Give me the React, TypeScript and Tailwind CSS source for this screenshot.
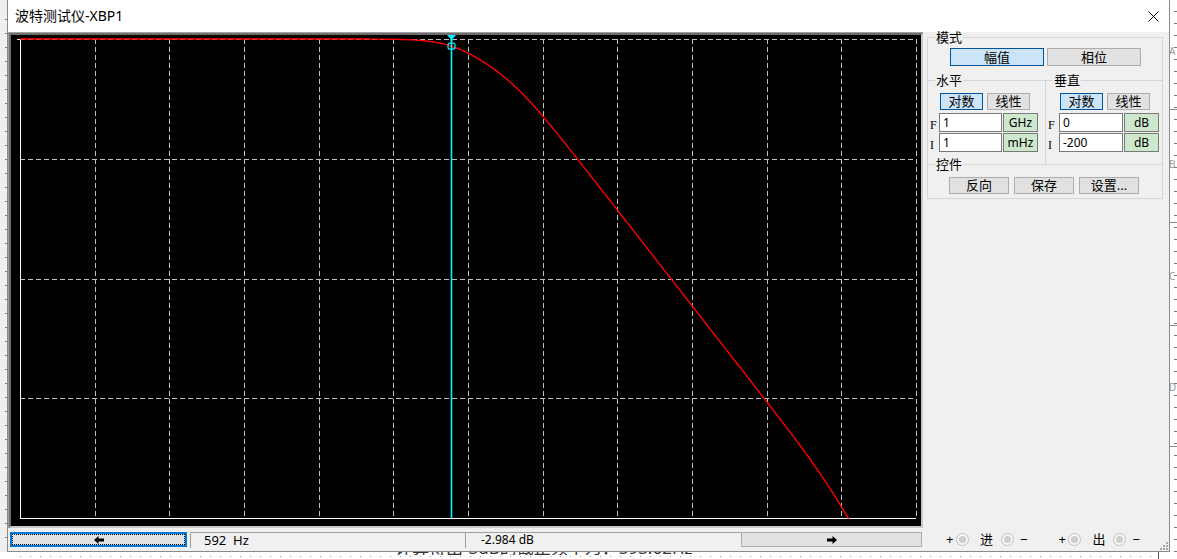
import React from 'react';

// plot geometry (inside the black area)
const X0 = 9;
const Y0 = 4;
const PW = 896;
const PH = 479;

const magDb = (f: number) => {
  const p = (fc: number) => 10 * Math.log10(1 + (f / fc) ** 2);
  return -(p(608) + p(4440) + p(83e6));
};

const curvePoints = () => {
  const pts: string[] = [];
  for (let x = X0; x <= X0 + PW; x += 1) {
    const f = Math.pow(10, ((x - X0) / PW) * 12 - 3);
    const y = Y0 + (-magDb(f) / 200) * PH;
    if (y > Y0 + PH) {
      pts.push(`${x},${Y0 + PH}`);
      break;
    }
    pts.push(`${x},${y.toFixed(2)}`);
  }
  return pts.join(' ');
};

const Plot = () => {
  const cols = Array.from({ length: 12 }, (_, i) => Math.round(X0 + ((i + 1) * PW) / 12) + 0.5);
  const rows = Array.from({ length: 4 }, (_, i) => Math.round(Y0 + (i * PH) / 4) + 0.5);
  const cx = 440.5;
  const cy = Y0 + (2.984 / 200) * PH;
  return (
    <svg width={909} height={490} className="block">
      {cols.map((x) => (
        <line key={x} x1={x} x2={x} y1={Y0} y2={Y0 + PH} stroke="#c4c4c4" strokeDasharray="5 3" />
      ))}
      {rows.map((y) => (
        <line key={y} x1={X0} x2={X0 + PW} y1={y} y2={y} stroke="#c4c4c4" strokeDasharray="5 3" />
      ))}
      <line x1={X0 + 0.5} x2={X0 + 0.5} y1={Y0} y2={Y0 + PH + 0.5} stroke="#fff" />
      <line x1={X0} x2={X0 + PW} y1={Y0 + PH + 0.5} y2={Y0 + PH + 0.5} stroke="#fff" />
      <line x1={6} x2={X0} y1={Y0 + 0.5} y2={Y0 + 0.5} stroke="#fff" />
      <polyline points={curvePoints()} fill="none" stroke="#ff0000" strokeWidth={1.4} />
      <line x1={cx} x2={cx} y1={0} y2={Y0 + PH} stroke="#00f0ff" strokeWidth={1.6} />
      <polygon points={`${cx - 4.5},0 ${cx + 4.5},0 ${cx + 1},4 ${cx + 1},6 ${cx - 1},6 ${cx - 1},4`} fill="#00f0ff" />
      <rect x={cx - 3.5} y={cy - 3} width={7} height={6} rx={2} fill="none" stroke="#00f0ff" strokeWidth={1.2} />
    </svg>
  );
};

const Btn = ({ label, active, className }: { label: string; active?: boolean; className: string }) => (
  <div
    className={`flex items-center justify-center border text-[13px] leading-none text-black ${
      active ? 'bg-[#cce4f7] border-[#005499]' : 'bg-[#e1e1e1] border-[#adadad]'
    } ${className}`}
  >
    {label}
  </div>
);

const Legend = ({ text, className = 'ml-[7px]' }: { text: string; className?: string }) => (
  <legend className={`${className} px-[1px] text-[13px] leading-[11px] text-black`}>{text}</legend>
);

const FieldRow = ({ tag, value, unit, labelW, inputW }: { tag: string; value: string; unit: string; labelW: string; inputW: string }) => (
  <div className="flex h-[19px] items-stretch">
    <div className={`${labelW} flex items-center pl-[2px] pt-[4px] text-[12px] font-['Liberation_Serif',serif] leading-none`}>
      {tag}
    </div>
    <div className={`${inputW} flex items-center border border-[#7a7a7a] bg-white pl-[3px] text-[12px] leading-none`}>
      {value}
    </div>
    <div className="ml-[1px] flex w-[35px] items-center justify-center border border-[#7a7a7a] bg-[#cde8cd] text-[12px] leading-none">
      {unit}
    </div>
  </div>
);

const Radio = () => (
  <div className="flex h-[13px] w-[13px] items-center justify-center rounded-full border border-[#c2c2c2] bg-[#f6f6f6]">
    <div className="h-[7px] w-[7px] rounded-full bg-[#cdcdcd]" />
  </div>
);

const Arrow = ({ dir }: { dir: 'l' | 'r' }) => (
  <svg width={10} height={8} viewBox="0 0 10 8" className={dir === 'r' ? 'rotate-180' : ''}>
    <polygon points="0,4 4.5,0 4.5,2.5 10,2.5 10,5.5 4.5,5.5 4.5,8" fill="#000" />
  </svg>
);

const Panel = () => (
  <fieldset className="ml-[4px] w-[236px] self-start border border-[#d6d6d6]">
    <Legend text="模式" />
    <div className="ml-[22px] mt-[5px] flex gap-[3px]">
      <Btn label="幅值" active className="h-[18px] w-[94px]" />
      <Btn label="相位" className="h-[18px] w-[94px]" />
    </div>
    <div className="mt-[9px] flex">
      <fieldset className="h-[90px] w-[118px] border-t border-r border-[#d6d6d6]">
        <Legend text="水平" />
        <div className="ml-[12px] mt-[7px] flex gap-[4px]">
          <Btn label="对数" active className="h-[17px] w-[43px]" />
          <Btn label="线性" className="h-[17px] w-[43px]" />
        </div>
        <div className="mt-[3px] flex flex-col gap-[1px]">
          <FieldRow tag="F" value="1" unit="GHz" labelW="w-[11px]" inputW="w-[63px]" />
          <FieldRow tag="I" value="1" unit="mHz" labelW="w-[11px]" inputW="w-[63px]" />
        </div>
      </fieldset>
      <fieldset className="h-[90px] flex-1 border-t border-[#d6d6d6]">
        <Legend text="垂直" />
        <div className="ml-[14px] mt-[7px] flex gap-[4px]">
          <Btn label="对数" active className="h-[17px] w-[43px]" />
          <Btn label="线性" className="h-[17px] w-[43px]" />
        </div>
        <div className="mt-[3px] flex flex-col gap-[1px]">
          <FieldRow tag="F" value="0" unit="dB" labelW="w-[13px]" inputW="w-[64px]" />
          <FieldRow tag="I" value="-200" unit="dB" labelW="w-[13px]" inputW="w-[64px]" />
        </div>
      </fieldset>
    </div>
    <fieldset className="-mt-[6px] border-t border-[#d6d6d6]">
      <Legend text="控件" />
      <div className="mb-[4px] ml-[21px] mt-[7px] flex gap-[5px]">
        <Btn label="反向" className="h-[17px] w-[60px]" />
        <Btn label="保存" className="h-[17px] w-[60px]" />
        <Btn label="设置..." className="h-[17px] w-[60px]" />
      </div>
    </fieldset>
  </fieldset>
);

const Backdrop = () => (
  <div className="absolute inset-0 z-0">
    {/* left edge of the schematic */}
    <div className="absolute left-0 top-0 h-[552px] w-[7px] bg-[#efefef]" />
    <div className="absolute left-[5px] top-[6px] h-[540px] w-[2px] bg-[repeating-linear-gradient(to_bottom,transparent_0px,transparent_13px,#7a7a7a_13px,#7a7a7a_14px)]" />
    {/* right edge */}
    <div className="absolute right-0 top-0 h-[559px] w-[3px] bg-[repeating-linear-gradient(to_bottom,transparent_0px,transparent_11px,#7a7a7a_11px,#7a7a7a_12px)]" />
    <div className="absolute right-0 top-[109px] h-px w-[8px] bg-[#8a8a8a]" />
    <div className="absolute right-0 top-[222px] h-px w-[8px] bg-[#8a8a8a]" />
    <div className="absolute right-0 top-[325px] h-px w-[8px] bg-[#8a8a8a]" />
    <div className="absolute right-0 top-[446px] h-px w-[8px] bg-[#8a8a8a]" />
    <div className="absolute left-[1169px] top-[46px] text-[10px] leading-none text-[#9a9a9a]">A</div>
    <div className="absolute left-[1169px] top-[159px] text-[10px] leading-none text-[#9a9a9a]">B</div>
    <div className="absolute left-[1169px] top-[271px] text-[10px] leading-none text-[#9a9a9a]">C</div>
    <div className="absolute left-[1169px] top-[382px] text-[10px] leading-none text-[#9a9a9a]">D</div>
    {/* bottom strip */}
    <div className="absolute left-[20px] top-[556px] h-px w-[1140px] bg-[repeating-linear-gradient(to_right,#9a9a9a_0px,#9a9a9a_1px,transparent_1px,transparent_10px)]" />
    <div className="absolute left-[1158px] top-[545px] h-[14px] w-px bg-[#555]" />
    {/* only the lower edge of this schematic note peeks out below the dialog */}
    <div className="absolute left-[395px] top-[552px] h-[3px] overflow-hidden">
      <div className="-mt-[13px] whitespace-nowrap text-[17px] leading-none text-[#333]">
        计算得出-3dB的截止频率为：593.62Hz
      </div>
    </div>
  </div>
);

export default function App() {
  return (
    <div className="relative h-[559px] w-[1177px] overflow-hidden bg-white font-['Noto_Sans','Noto_Sans_CJK_SC',sans-serif] text-black">
      <Backdrop />
      <div className="relative z-10 ml-[7px] flex h-[552px] w-[1163px] flex-col border border-t-0 border-[#8a8a8a] bg-[#f0f0f0]">
        <div className="flex h-[32px] items-center justify-between bg-white pl-[7px] pr-[10px]">
          <span className="text-[14px] leading-none">波特测试仪-XBP1</span>
          <svg width={11} height={11} viewBox="0 0 11 11">
            <path d="M0.5 0.5 L10.5 10.5 M10.5 0.5 L0.5 10.5" stroke="#000" strokeWidth={1} />
          </svg>
        </div>
        <div className="flex flex-1 flex-col">
          <div className="flex">
            <div className="h-[496px] w-[915px] border-l border-t border-[#a0a0a0] border-b-white border-r-white">
              <div className="h-full w-full border-2 border-[#6e6e6e] border-b-[#c8c8c8] border-r-[#c8c8c8] bg-black">
                <Plot />
              </div>
            </div>
            <Panel />
          </div>
          <div className="relative mt-[4px] flex h-[15px] items-center">
            <div className="ml-[2px] h-[15px] w-[177px] border-2 border-[#0078d7] bg-[#e1e1e1]">
              <div className="flex h-full w-full items-center justify-center border border-dotted border-black">
                <Arrow dir="l" />
              </div>
            </div>
            <div className="ml-[3px] flex h-[16px] w-[275px] items-center border-l border-t border-[#a0a0a0] pl-[13px] text-[13px] leading-none">
              592&nbsp; Hz
            </div>
            <div className="flex h-[16px] w-[276px] items-center border-l border-t border-[#a0a0a0] pl-[15px] text-[12px] leading-none">
              -2.984 dB
            </div>
            <div className="flex h-[15px] w-[181px] items-center justify-center border border-[#adadad] bg-[#e1e1e1]">
              <Arrow dir="r" />
            </div>
            <div className="ml-[24px] flex items-center text-[13px] leading-none">
              <span className="w-[8px]">+</span>
              <div className="ml-[2px]"><Radio /></div>
              <span className="ml-[11px]">进</span>
              <div className="ml-[8px]"><Radio /></div>
              <span className="ml-[6px]">−</span>
              <span className="ml-[31px] w-[8px]">+</span>
              <div className="ml-[2px]"><Radio /></div>
              <span className="ml-[11px]">出</span>
              <div className="ml-[8px]"><Radio /></div>
              <span className="ml-[6px]">−</span>
            </div>
          </div>
        </div>
        <svg width={9} height={9} className="absolute bottom-[1px] right-[1px]" viewBox="0 0 9 9">
          {[[7, 1], [4, 4], [7, 4], [1, 7], [4, 7], [7, 7]].map(([x, y]) => (
            <rect key={`${x}-${y}`} x={x} y={y} width={2} height={2} fill="#a8a8a8" />
          ))}
        </svg>
      </div>
    </div>
  );
}
